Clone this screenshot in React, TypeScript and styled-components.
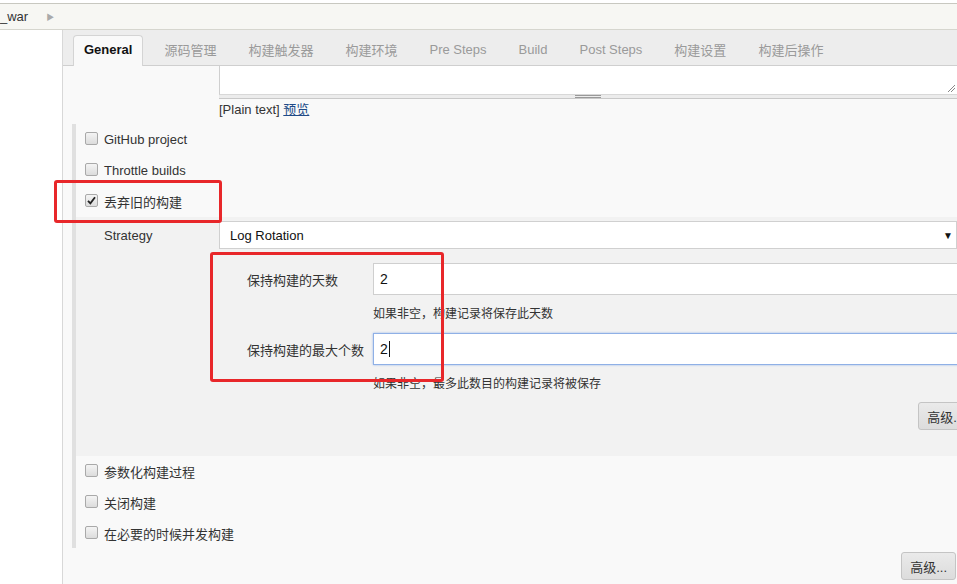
import styled, { createGlobalStyle } from "styled-components"

const GlobalStyle = createGlobalStyle`
  body {
    margin: 0;
    background: #fff;
    font-family: "Liberation Sans", "Noto Sans CJK SC", Arial, sans-serif;
    font-size: 13px;
    color: #333;
    overflow: hidden;
  }
`

const Page = styled.div`
  position: relative;
  width: 957px;
  height: 584px;
  overflow: hidden;
`

const Breadcrumbs = styled.div`
  margin-top: 3px;
  height: 25px;
  border-top: 1px solid #c8c8c0;
  border-bottom: 1px solid #d6d6ce;
  background: #f7f7f3;
  display: flex;
  align-items: center;
  gap: 18px;
  color: #333;
`

const Crumb = styled.span`
  margin-left: 0;
`

const CrumbArrow = styled.span`
  color: #aaa;
  font-size: 8px;
`

const Main = styled.div`
  display: flex;
  height: 554px;
`

const Side = styled.div`
  width: 62px;
  flex: none;
  background: #fff;
  border-right: 1px solid #d8d8d8;
`

const Content = styled.div`
  flex: 1;
  background: #f9f9f9;
  display: flex;
  flex-direction: column;
`

const TabBar = styled.div`
  height: 36px;
  box-sizing: border-box;
  background: #ededed;
  border-bottom: 1px solid #cfcfcf;
  display: flex;
  align-items: flex-end;
  gap: 10px;
  padding-left: 10px;
`

const Tab = styled.div<{ $active?: boolean }>`
  height: 31px;
  box-sizing: border-box;
  padding: 0 10px 3px;
  display: flex;
  align-items: center;
  white-space: nowrap;
  font-size: 13px;
  color: ${({ $active }) => ($active ? "#111" : "#9a9a9a")};
  font-weight: ${({ $active }) => ($active ? 700 : 400)};
  background: ${({ $active }) => ($active ? "#f9f9f9" : "transparent")};
  border: 1px solid ${({ $active }) => ($active ? "#d4d4d4" : "transparent")};
  border-bottom: none;
  border-radius: 4px 4px 0 0;
  margin-bottom: -1px;
`

const Desc = styled.div`
  padding-left: 156px;
`

const TextArea = styled.div`
  position: relative;
  height: 28px;
  background: #fff;
  border-left: 1px solid #cfcfcf;
  border-bottom: 1px solid #d8d8d8;
`

const ResizeMark = styled.svg`
  position: absolute;
  right: 1px;
  bottom: 1px;
`

const Grip = styled.div`
  height: 3px;
  background: #ececec;
  border-bottom: 1px solid #c9c9c9;
  display: flex;
  justify-content: center;
  align-items: center;
`

const GripLines = styled.div`
  width: 26px;
  height: 1px;
  border-top: 1px solid #999;
  border-bottom: 1px solid #999;
  box-sizing: content-box;
`

const PlainText = styled.div`
  height: 16px;
  margin-top: 3px;
  line-height: 16px;
  font-size: 13px;
  color: #333;
`

const Link = styled.a`
  color: #204a87;
  text-decoration: underline;
`

const Section = styled.div`
  margin-top: 6px;
  margin-left: 9px;
  border-left: 4px solid #e0e0e0;
  height: 424px;
  display: flex;
  flex-direction: column;
`

const CheckRow = styled.label`
  height: 31px;
  flex: none;
  display: flex;
  align-items: center;
  padding-left: 9px;
  gap: 6px;
  color: #333;
  font-size: 13px;
  white-space: nowrap;
`

const Box = styled.span<{ $checked?: boolean }>`
  width: 11px;
  height: 11px;
  flex: none;
  border: 1px solid #a9a9a9;
  border-radius: 2px;
  background: linear-gradient(#f4f4f4, #dcdcdc);
  display: flex;
  align-items: center;
  justify-content: center;
  margin-top: -2px;
`

const Nested = styled.div`
  background: #f2f2f2;
  height: 239px;
  flex: none;
  margin-right: -16px;
  padding-top: 4px;
  box-sizing: border-box;
  display: flex;
  flex-direction: column;
`

const StrategyRow = styled.div`
  display: flex;
  align-items: center;
  height: 28px;
`

const StrategyLabel = styled.div`
  width: 143px;
  padding-left: 28px;
  box-sizing: border-box;
  flex: none;
`

const Select = styled.div`
  flex: 1;
  height: 28px;
  box-sizing: border-box;
  background: #fff;
  border: 1px solid #d0d0d0;
  display: flex;
  align-items: center;
  justify-content: space-between;
  padding: 0 0 0 10px;
  margin-right: 16px;
  color: #111;
`

const Caret = styled.span`
  font-size: 10px;
  color: #111;
  margin-right: 3px;
`

const Fields = styled.div`
  display: grid;
  grid-template-columns: 126px 1fr;
  padding-left: 171px;
  margin-top: 14px;
`

const FieldLabel = styled.div`
  height: 32px;
  display: flex;
  align-items: center;
  color: #333;
  white-space: nowrap;
`

const Input = styled.div<{ $focus?: boolean }>`
  height: 32px;
  box-sizing: border-box;
  background: #fff;
  border: 1px solid ${({ $focus }) => ($focus ? "#8fb0e6" : "#cfcfcf")};
  box-shadow: ${({ $focus }) => ($focus ? "0 0 2px #9ab8ea" : "none")};
  display: flex;
  align-items: center;
  padding-left: 6px;
  color: #111;
  font-size: 14px;
`

const TextCaret = styled.span`
  display: inline-block;
  width: 1px;
  height: 16px;
  background: #111;
  margin-left: 1px;
`

const Help = styled.div<{ $top: number; $bottom: number }>`
  grid-column: 2;
  height: 16px;
  line-height: 16px;
  margin-top: ${({ $top }) => $top}px;
  margin-bottom: ${({ $bottom }) => $bottom}px;
  color: #333;
  font-size: 12px;
`

const ButtonRow = styled.div<{ $right: number; $top?: number }>`
  display: flex;
  justify-content: flex-end;
  padding-right: ${({ $right }) => $right}px;
  margin-top: ${({ $top }) => $top ?? 0}px;
`

const AdvButton = styled.button`
  height: 28px;
  padding: 0 8px;
  font-family: inherit;
  font-size: 13px;
  color: #333;
  background: linear-gradient(#eaeaea, #dcdcdc);
  border: 1px solid #c4c4c4;
  border-radius: 3px;
`

const Mark = styled.div<{ $x: number; $y: number; $w: number; $h: number }>`
  position: absolute;
  left: ${({ $x }) => $x}px;
  top: ${({ $y }) => $y}px;
  width: ${({ $w }) => $w}px;
  height: ${({ $h }) => $h}px;
  box-sizing: border-box;
  border: 3px solid #e8272a;
  border-radius: 3px;
  pointer-events: none;
`

const Check = () => (
  <svg width="9" height="9" viewBox="0 0 9 9">
    <path d="M1 4.8 L3.4 7.4 L8 1.2" fill="none" stroke="#222" strokeWidth="1.8" />
  </svg>
)

const CheckItem = ({ label, checked }: { label: string, checked?: boolean }) => (
  <CheckRow>
    <Box $checked={checked}>{checked && <Check />}</Box>
    {label}
  </CheckRow>
)

const tabs = ["General", "源码管理", "构建触发器", "构建环境", "Pre Steps", "Build", "Post Steps", "构建设置", "构建后操作"]

export default function App() {
  return (
    <Page>
      <GlobalStyle />
      <Breadcrumbs>
        <Crumb>_war</Crumb>
        <CrumbArrow>▶</CrumbArrow>
      </Breadcrumbs>
      <Main>
        <Side />
        <Content>
          <TabBar>
            {tabs.map((t, i) => (
              <Tab key={t} $active={i === 0}>{t}</Tab>
            ))}
          </TabBar>
          <Desc>
            <TextArea>
              <ResizeMark width="10" height="10" viewBox="0 0 10 10">
                <path d="M2 9 L9 2 M5 9 L9 5" stroke="#888" strokeWidth="1" />
              </ResizeMark>
            </TextArea>
            <Grip><GripLines /></Grip>
            <PlainText>[Plain text] <Link>预览</Link></PlainText>
          </Desc>
          <Section>
            <CheckItem label="GitHub project" />
            <CheckItem label="Throttle builds" />
            <CheckItem label="丢弃旧的构建" checked />
            <Nested>
              <StrategyRow>
                <StrategyLabel>Strategy</StrategyLabel>
                <Select>
                  Log Rotation
                  <Caret>▼</Caret>
                </Select>
              </StrategyRow>
              <Fields>
                <FieldLabel>保持构建的天数</FieldLabel>
                <Input>2</Input>
                <Help $top={11} $bottom={11}>如果非空，构建记录将保存此天数</Help>
                <FieldLabel>保持构建的最大个数</FieldLabel>
                <Input $focus>2<TextCaret /></Input>
                <Help $top={11} $bottom={10}>如果非空，最多此数目的构建记录将被保存</Help>
              </Fields>
              <ButtonRow $right={0}>
                <AdvButton>高级...</AdvButton>
              </ButtonRow>
            </Nested>
            <CheckItem label="参数化构建过程" />
            <CheckItem label="关闭构建" />
            <CheckItem label="在必要的时候并发构建" />
          </Section>
          <ButtonRow $right={1} $top={4}>
            <AdvButton>高级...</AdvButton>
          </ButtonRow>
        </Content>
      </Main>
      <Mark $x={54} $y={180} $w={168} $h={43} />
      <Mark $x={210} $y={252} $w={234} $h={130} />
    </Page>
  )
}
